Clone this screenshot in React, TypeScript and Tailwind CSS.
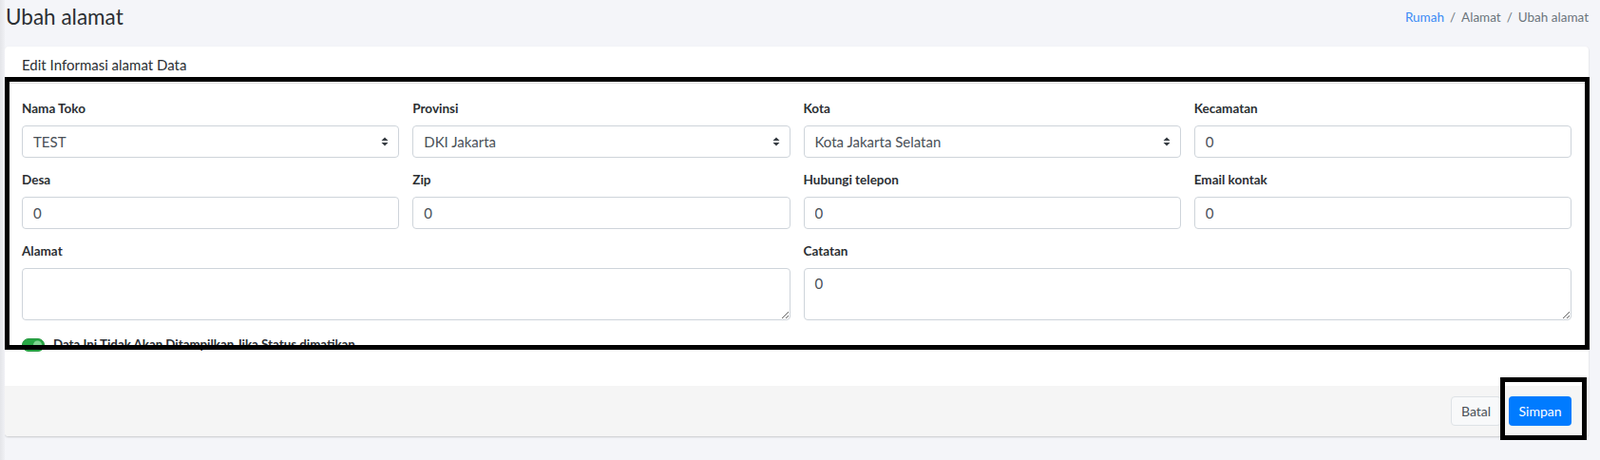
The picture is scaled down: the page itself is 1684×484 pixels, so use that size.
import React from 'react';

const SortIcon = () => (
  <svg width="8" height="10" viewBox="0 0 8 10" className="pointer-events-none absolute right-[11px] top-1/2 -translate-y-1/2">
    <path d="M4 0.5 L7.5 4 H0.5 Z" fill="#343a40" />
    <path d="M4 9.5 L7.5 6 H0.5 Z" fill="#343a40" />
  </svg>
);

const Label: React.FC<{ children: React.ReactNode }> = ({ children }) => (
  <label className="block text-[13.5px] font-bold leading-[21px] text-[#2b2f33] mb-[7px]">{children}</label>
);

const SelectField: React.FC<{ label: string; value: string }> = ({ label, value }) => (
  <div>
    <Label>{label}</Label>
    <div className="relative">
      <select
        defaultValue={value}
        className="w-full h-[34px] appearance-none rounded-[4px] border border-[#ced4da] bg-white pl-[11px] pr-8 text-[15px] text-[#495057] outline-none"
      >
        <option>{value}</option>
      </select>
      <SortIcon />
    </div>
  </div>
);

const InputField: React.FC<{ label: string; value: string }> = ({ label, value }) => (
  <div>
    <Label>{label}</Label>
    <input
      type="text"
      readOnly
      value={value}
      className="w-full h-[34px] rounded-[4px] border border-[#ced4da] bg-white px-[11px] text-[15px] text-[#495057] outline-none"
    />
  </div>
);

const AreaField: React.FC<{ label: string; value: string }> = ({ label, value }) => (
  <div className="col-span-2">
    <Label>{label}</Label>
    <textarea
      readOnly
      value={value}
      className="block w-full h-[55px] rounded-[4px] border border-[#ced4da] bg-white px-[11px] py-[5px] text-[15px] leading-[21px] text-[#495057] outline-none"
    />
  </div>
);

export default function App() {
  return (
    <div className="relative min-h-[484px] bg-[#f4f5f9] font-['Lato','Noto_Sans',sans-serif] text-[#343a40]">
      {/* sidebar edge */}
      <div className="absolute left-0 top-0 h-full w-[5px] bg-gradient-to-r from-[#e4e5e9] to-[#f0f1f5]" />

      <div className="flex items-center justify-between h-[36px] pl-[6px] pr-[12px]">
        <h1 className="text-[22.5px] leading-none font-normal text-[#2b2f33]">Ubah alamat</h1>
        <nav className="flex items-center gap-[6px] text-[13.5px] text-[#6c757d]">
          <span className="text-[#3b8cf5]">Rumah</span>
          <span>/</span>
          <span>Alamat</span>
          <span>/</span>
          <span>Ubah alamat</span>
        </nav>
      </div>

      <div className="ml-[5px] mr-[12px] mt-[13px] rounded-[4px] bg-white shadow-[0_1px_2px_rgba(0,0,0,0.18)] overflow-hidden">
        <div className="h-[39px] flex items-center px-[18px] border-b border-[#e6e6e6] text-[15px] text-[#2b2f33]">
          Edit Informasi alamat Data
        </div>

        <div className="px-[18px] pt-[16px] pb-[36px]">
          <div className="grid grid-cols-4 gap-x-[14px] gap-y-[13px]">
            <SelectField label="Nama Toko" value="TEST" />
            <SelectField label="Provinsi" value="DKI Jakarta" />
            <SelectField label="Kota" value="Kota Jakarta Selatan" />
            <InputField label="Kecamatan" value="0" />
            <InputField label="Desa" value="0" />
            <InputField label="Zip" value="0" />
            <InputField label="Hubungi telepon" value="0" />
            <InputField label="Email kontak" value="0" />
            <AreaField label="Alamat" value="" />
            <AreaField label="Catatan" value="0" />
          </div>

          <div className="mt-[18px] flex items-center gap-[9px] h-[15px]">
            <div className="relative w-[24px] h-[14px] rounded-full bg-[#28a745] border border-[#23963d]">
              <div className="absolute right-[2px] top-1/2 -translate-y-1/2 w-[9px] h-[9px] rounded-full bg-[#7fd691]" />
            </div>
            <span className="text-[13.3px] font-bold text-[#2b2f33] leading-none">
              Data Ini Tidak Akan Ditampilkan Jika Status dimatikan
            </span>
          </div>
        </div>

        <div className="h-[53px] bg-[#f5f5f5] flex items-center justify-end gap-[8px] pr-[18px]">
          <button className="h-[31px] w-[53px] rounded-[4px] border border-[#dee2e6] bg-[#f8f9fa] text-[14px] text-[#495057]">
            Batal
          </button>
          <button className="h-[31px] w-[66px] rounded-[4px] bg-[#007bff] text-[14px] text-white">
            Simpan
          </button>
        </div>
      </div>

      {/* annotation frames */}
      <div className="pointer-events-none absolute left-[5px] top-[81px] w-[1668px] h-[287px] border-[5px] border-black" />
      <div className="pointer-events-none absolute left-[1579px] top-[397px] w-[91px] h-[66px] border-[5px] border-black" />
    </div>
  );
}
